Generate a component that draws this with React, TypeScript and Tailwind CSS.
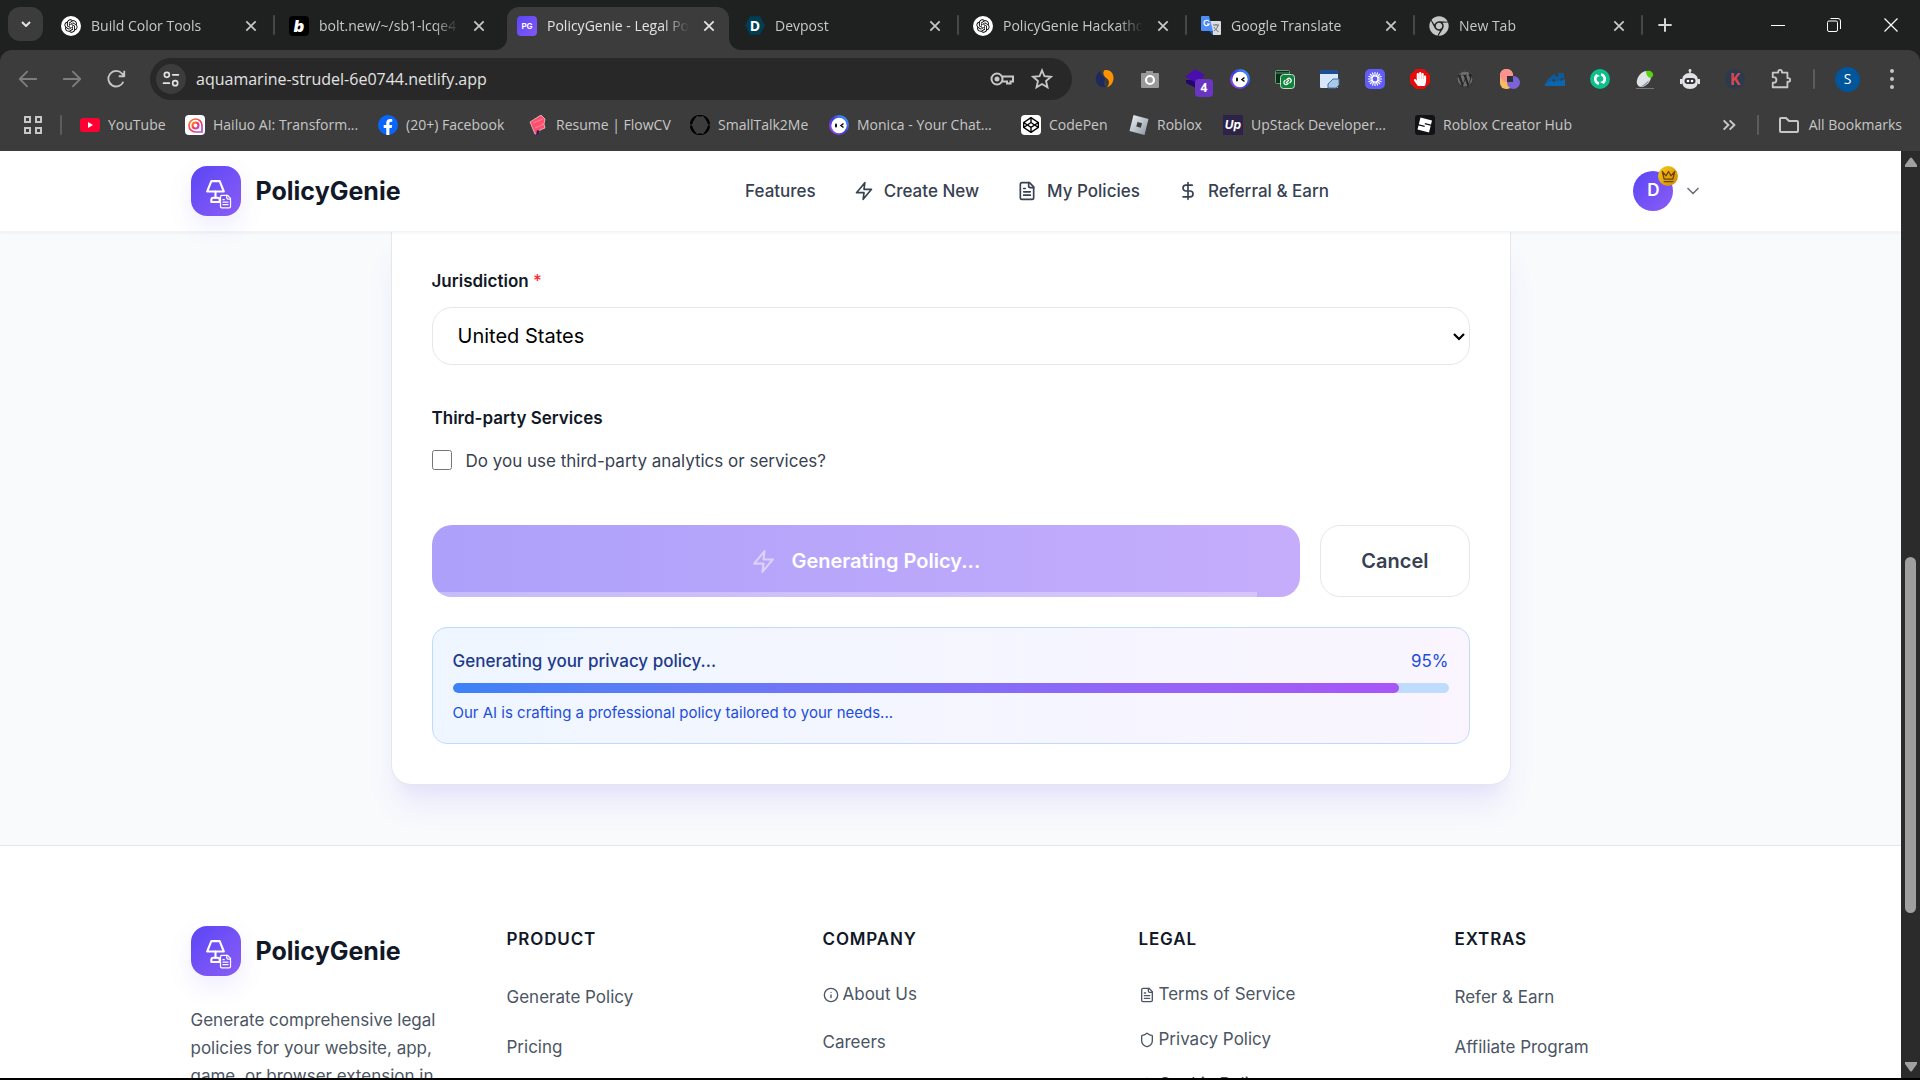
import React, { useState } from "react";
import { RiOpenaiFill } from "react-icons/ri";
import { FaWordpress, FaCodepen, FaChrome, FaFacebookF, FaHandPaper } from "react-icons/fa";

type IconProps = { className?: string; children?: React.ReactNode };

function Icon({ className, children }: IconProps) {
  return (
    <svg viewBox="0 0 24 24" fill="none" stroke="currentColor" strokeWidth="2" strokeLinecap="round" strokeLinejoin="round" aria-hidden="true" className={className}>
      {children}
    </svg>
  );
}

/* ---------- Line icons ---------- */

const Zap = ({ className }: IconProps) => (
  <Icon className={className}><polygon points="13 2 3 14 12 14 11 22 21 10 12 10 13 2" /></Icon>
);
const FileText = ({ className }: IconProps) => (
  <Icon className={className}>
    <path d="M15 2H6a2 2 0 0 0-2 2v16a2 2 0 0 0 2 2h12a2 2 0 0 0 2-2V7Z" />
    <path d="M14 2v4a2 2 0 0 0 2 2h4" />
    <path d="M10 9H8M16 13H8M16 17H8" />
  </Icon>
);
const Dollar = ({ className }: IconProps) => (
  <Icon className={className}><path d="M12 2v20" /><path d="M17 5H9.500a3.500 3.500 0 0 0 0 7h5a3.500 3.500 0 0 1 0 7H6" /></Icon>
);
const Crown = ({ className }: IconProps) => (
  <Icon className={className}><path d="m2 4 3 12h14l3-12-6 7-4-7-4 7-6-7zm3 16h14" /></Icon>
);
const ChevronDown = ({ className }: IconProps) => (
  <Icon className={className}><path d="m6 9 6 6 6-6" /></Icon>
);
const Info = ({ className }: IconProps) => (
  <Icon className={className}><circle cx="12" cy="12" r="10" /><path d="M12 16v-4M12 8h.01" /></Icon>
);
const Shield = ({ className }: IconProps) => (
  <Icon className={className}>
    <path d="M20 13c0 5-3.500 7.500-7.660 8.950a1 1 0 0 1-.670-.010C7.500 20.500 4 18 4 13V6a1 1 0 0 1 1-1c2 0 4.500-1.200 6.240-2.720a1.170 1.170 0 0 1 1.520 0C14.510 3.810 17 5 19 5a1 1 0 0 1 1 1z" />
  </Icon>
);
const Cookie = ({ className }: IconProps) => (
  <Icon className={className}>
    <path d="M12 2a10 10 0 1 0 10 10 4 4 0 0 1-5-5 4 4 0 0 1-5-5" />
    <path d="M8.500 8.500v.01M16 15.500v.01M12 12v.01M11 17v.01M7 14v.01" />
  </Icon>
);
const Cross = ({ className }: IconProps) => (
  <Icon className={className}><path d="M4 4l16 16M20 4 4 20" strokeWidth="3" strokeLinecap="butt" /></Icon>
);

/* ---------- Site icons ---------- */

const OpenAiBadge = () => (
  <span className="flex size-5 items-center justify-center rounded-full bg-white text-black"><RiOpenaiFill className="size-4" /></span>
);
const BoltBadge = () => (
  <span className="flex size-5 items-center justify-center rounded bg-black font-['Inter'] text-base font-black text-white italic">b</span>
);
const GenieBadge = () => (
  <span className="flex size-5 items-center justify-center rounded bg-gradient-to-br from-[#5b45f5] to-[#8358f6] font-['Inter'] text-[8px] font-bold text-white">PG</span>
);
const DevpostBadge = () => (
  <span className="flex size-5 items-center justify-center bg-[#003e54] font-['Open_Sans'] text-sm font-bold text-white [clip-path:polygon(25%_4%,75%_4%,100%_50%,75%_96%,25%_96%,0_50%)]">D</span>
);
const TranslateBadge = () => (
  <svg viewBox="0 0 20 20" className="size-5">
    <path d="M8 5h11a1 1 0 0 1 1 1v12a1 1 0 0 1-1 1h-7z" fill="#dadce0" />
    <path d="M12 9h6M15 8v1M17 9c-.5 3-2.500 5-4 6M13 11c1 2 3 4 4.500 4.500" stroke="#6b7075" fill="none" />
    <path d="M1 0h7l4 15H1a1 1 0 0 1-1-1V1a1 1 0 0 1 1-1z" fill="#4d8df6" />
    <path d="M12 15H8.500l3 4z" fill="#1d56c4" />
    <path d="M8 5.500A2.700 2.700 0 1 0 8.200 8H6" stroke="#fff" strokeWidth="1.200" fill="none" />
  </svg>
);
const MonicaIcon = ({ className }: IconProps) => (
  <svg viewBox="0 0 20 20" className={className}>
    <defs>
      <linearGradient id="mon" x1="0" y1="1" x2="1" y2="0"><stop offset="0" stopColor="#b04bf5" /><stop offset=".5" stopColor="#3d3ae0" /><stop offset="1" stopColor="#3fb6ff" /></linearGradient>
    </defs>
    <circle cx="10" cy="10" r="10" fill="url(#mon)" />
    <circle cx="10" cy="10.500" r="7.700" fill="#fff" />
    <rect x="6" y="8.500" width="2" height="4" rx="1" fill="#111" />
    <path d="m14.500 8.500-2.500 2 2.500 2" stroke="#111" strokeWidth="1.600" fill="none" />
  </svg>
);

/* ---------- Browser: tab strip ---------- */

type TabInfo = { title: string; icon: React.ReactNode; active?: boolean; divider?: boolean };

const tabs: TabInfo[] = [
  { title: "Build Color Tools", icon: <OpenAiBadge />, divider: true },
  { title: "bolt.new/~/sb1-lcqe4", icon: <BoltBadge /> },
  { title: "PolicyGenie - Legal Policy", icon: <GenieBadge />, active: true },
  { title: "Devpost", icon: <DevpostBadge />, divider: true },
  { title: "PolicyGenie Hackathon", icon: <OpenAiBadge />, divider: true },
  { title: "Google Translate", icon: <TranslateBadge />, divider: true },
  { title: "New Tab", icon: <FaChrome className="size-5 text-[#c4c7c5]" />, divider: true },
];

function Tab({ tab }: { tab: TabInfo }) {
  return (
    <div className={tab.active ? "relative flex max-w-[228px] min-w-0 flex-1 pr-0.5 pl-1" : "relative flex max-w-[228px] min-w-0 flex-1"}>
      {tab.active && (
        <>
          <svg viewBox="0 0 12 12" className="absolute bottom-0 -left-2 size-3"><path d="M12 0v12H0A12 12 0 0 0 12 0z" fill="#3c3c3c" /></svg>
          <svg viewBox="0 0 12 12" className="absolute -right-2.5 bottom-0 size-3"><path d="M0 0v12h12A12 12 0 0 1 0 0z" fill="#3c3c3c" /></svg>
        </>
      )}
      <div className={tab.active ? "flex min-w-0 flex-1 items-center rounded-t-xl bg-[#3c3c3c] pr-3 pb-1.5 pl-2.5 text-[#e3e3e3]" : "flex min-w-0 flex-1 items-center pr-4 pb-1.5 pl-3.5 text-[#c7c7c7]"}>
        {tab.icon}
        <span className="ml-2.5 min-w-0 flex-1 overflow-hidden text-sm whitespace-nowrap [mask-image:linear-gradient(to_right,black_82%,transparent)]">{tab.title}</span>
        <button type="button" aria-label={"Close " + tab.title} className="ml-3 flex size-4 items-center justify-center">
          <Cross className="size-3.5" />
        </button>
      </div>
      {tab.divider && <span className="absolute top-2 right-0 h-5 w-0.5 rounded bg-[#474747]" />}
    </div>
  );
}

function TabStrip() {
  return (
    <div className="flex h-[50px] bg-[#1f2120] pt-[7px]">
      <button type="button" aria-label="Search tabs" className="mr-1 ml-2 flex h-[34px] w-[35px] flex-none items-center justify-center rounded-xl bg-[#3c3c3c] text-[#e3e3e3]">
        <Icon className="size-4"><path d="m6 9 6 6 6-6" strokeWidth="3" strokeLinecap="butt" /></Icon>
      </button>
      {tabs.map((t) => <Tab key={t.title} tab={t} />)}
      <button type="button" aria-label="New tab" className="ml-3 flex h-9 w-5 flex-none items-center justify-center text-[#d5d5d5]">
        <Icon className="size-4"><path d="M12 2v20M2 12h20" strokeWidth="3" strokeLinecap="butt" /></Icon>
      </button>
      <div className="ml-auto flex h-9 flex-none items-center text-white">
        <button type="button" aria-label="Minimize" className="flex w-14 justify-center">
          <svg viewBox="0 0 14 14" className="size-3.5"><path d="M0 7.500h14" stroke="currentColor" /></svg>
        </button>
        <button type="button" aria-label="Restore" className="flex w-14 justify-center">
          <svg viewBox="0 0 14 14" fill="none" stroke="currentColor" className="size-3.5"><rect x=".5" y="3" width="10" height="10.500" rx="1.500" /><path d="M3.500.5H11a2.500 2.500 0 0 1 2.500 2.500v8" /></svg>
        </button>
        <button type="button" aria-label="Close window" className="flex w-[58px] justify-center">
          <svg viewBox="0 0 14 14" className="size-3.5"><path d="M.5.5l13 13M13.500.5l-13 13" stroke="currentColor" strokeWidth="1.200" /></svg>
        </button>
      </div>
    </div>
  );
}

/* ---------- Browser: toolbar ---------- */

const extensions: { name: string; art: React.ReactNode }[] = [
  { name: "Similarweb", art: <svg viewBox="0 0 20 20" className="size-5"><path d="M6 2C2 4 0 8 1 12c1 4 5 7 10 6-3-2-2-5-1-8C9 7 5 6 6 2z" fill="#1f2a5c" /><path d="M9 1.500c6-2 10 3 9.500 8.500-.5 4-2.500 7-6.500 8.500 2-3 3-6 .5-8.500C10 8 7 6 9 1.500z" fill="#ff9200" /></svg> },
  { name: "Screenshot", art: <svg viewBox="0 0 20 20" className="size-5"><path d="M6 4V2h7v2h5a1 1 0 0 1 1 1v13a1 1 0 0 1-1 1H2a1 1 0 0 1-1-1V5a1 1 0 0 1 1-1z" fill="#9a9a9a" /><circle cx="10" cy="11" r="4" fill="#9a9a9a" stroke="#fff" strokeWidth="2.200" /></svg> },
  {
    name: "Layers",
    art: (
      <span className="relative">
        <svg viewBox="0 0 20 20" className="size-5"><path d="M1 11v3l10 5 8-8z" fill="#23066b" /><path d="M10 0 20 6 12 14 0 8z" fill="#4a0db0" /></svg>
        <span className="absolute top-2.5 left-2.5 flex h-[18px] w-[18px] items-center justify-center rounded bg-[#6b35c4] text-xs font-bold text-white">4</span>
      </span>
    ),
  },
  { name: "Monica", art: <MonicaIcon className="size-5" /> },
  { name: "Link tool", art: <svg viewBox="0 0 20 20" className="size-5"><rect x=".5" y="1.500" width="14" height="13" rx="1" fill="#06301a" stroke="#7fae8d" strokeWidth=".8" /><path d="M1 4h13" stroke="#7fae8d" strokeWidth=".8" /><rect x="5.500" y="5.500" width="14" height="14" rx="3" fill="#11833a" stroke="#bfe3c9" /><path d="m11 14 3-3M11.500 11l1-1a2 2 0 0 1 3 3l-1 1M13.500 14l-1 1a2 2 0 0 1-3-3l1-1" stroke="#fff" strokeWidth="1.200" fill="none" /></svg> },
  { name: "Window resizer", art: <svg viewBox="0 0 20 20" className="size-5"><rect x="0" y="1" width="18" height="18" rx="1" fill="#d6e8fa" /><path d="M0 1h18v4H0z" fill="#1e4f8f" /><path d="M8 19v-4l5-5h6v6l-3 3z" fill="#a9c9e8" stroke="#466f9d" /></svg> },
  { name: "Loom", art: <svg viewBox="0 0 20 20" className="size-5"><rect width="20" height="20" rx="5" fill="#625df5" /><path d="M10 3v4M10 13v4M3 10h4M13 10h4M5 5l3 3M12 12l3 3M15 5l-3 3M8 12l-3 3M7.300 3.500l1.500 3.700M11.200 12.800l1.500 3.700M12.700 3.500l-1.500 3.700M8.800 12.800l-1.500 3.700M3.500 7.300l3.700 1.500M12.800 11.200l3.700 1.500M16.500 7.300l-3.700 1.500M7.200 11.200l-3.700 1.500" stroke="#fff" strokeWidth="1.100" /><circle cx="10" cy="10" r="3" stroke="#fff" strokeWidth="1.200" fill="#625df5" /></svg> },
  { name: "Ad blocker", art: <span className="flex size-5 items-center justify-center bg-[#e60c0c] text-white [clip-path:polygon(30%_0,70%_0,100%_30%,100%_70%,70%_100%,30%_100%,0_70%,0_30%)]"><FaHandPaper className="size-3.5" /></span> },
  { name: "Wordpress detector", art: <FaWordpress className="size-[18px] rounded-full bg-[#262626] text-[#6e6e6e]" /> },
  { name: "Colour shapes", art: <svg viewBox="0 0 20 20" className="size-5"><rect x="0" y="0" width="13" height="20" rx="6" fill="#f9bb62" /><path d="M0 6.500a6.500 6.500 0 0 1 13 0V13H6.500A6.500 6.500 0 0 1 0 6.500z" fill="#fa9390" /><circle cx="13.500" cy="13.500" r="6.500" fill="#7a63d6" /><path d="M7 7h6v6H7z" fill="#2f2f3a" /></svg> },
  { name: "Trends", art: <svg viewBox="0 0 20 20" className="size-5"><path d="M0 17v-2l5-5 4 3 4-3 3 2 4-2v7z" fill="#0c66ae" /><path d="M1 12l8-7 3 3 2-2-2-2h7v7l-2-2-5 4-3-3-5 3z" fill="#0c5a9c" /></svg> },
  { name: "Refresh", art: <svg viewBox="0 0 20 20" className="size-5"><circle cx="10" cy="10" r="10" fill="#0bc08a" /><path d="M9 14.500A4.500 4.500 0 0 1 6.500 7M11 5.500A4.500 4.500 0 0 1 13.500 13" stroke="#fff" strokeWidth="2.600" fill="none" /><path d="M4 9l2-4 4 2zM16 11l-2 4-4-2z" fill="#fff" /></svg> },
  { name: "Mouse tool", art: <svg viewBox="0 0 20 20" className="size-5"><path d="M1 19.500h18" stroke="#777" /><ellipse cx="9" cy="10" rx="6" ry="9" transform="rotate(38 9 10)" fill="#dfe3e8" /><path d="M5 18c4 0 8-3 9-7-3 3-6 5-9 7z" fill="#8f979f" /><path d="M11 2c4-1 8 1 7 5l-2 2c-3 0-5-3-5-7z" fill="#58d113" /></svg> },
  { name: "Robot", art: <svg viewBox="0 0 20 20" className="size-5"><path d="M10 0v5" stroke="#dadada" strokeWidth="1.500" /><circle cx="10" cy="1.500" r="1.500" fill="#dadada" /><path d="M10 4c5 0 8 3 8 8s-3 8-8 8-8-3-8-8 3-8 8-8z" fill="#e2e2e6" /><path d="M0 10h2v5H0zM18 10h2v5h-2z" fill="#e2e2e6" /><rect x="4.500" y="9" width="11" height="6" rx="3" fill="#333" /><circle cx="8" cy="12" r="1.300" fill="#fff" /><circle cx="12" cy="12" r="1.300" fill="#fff" /></svg> },
  { name: "K tool", art: <span className="flex size-5 items-center justify-center rounded-full bg-[#2b3a4e] text-base font-bold text-[#d9484c]">K</span> },
];

function Toolbar() {
  return (
    <div className="flex h-[58px] items-center text-[#c7c7c7]">
      <div className="flex w-[150px] flex-none items-center pl-[17px]">
        <button type="button" aria-label="Back" className="mr-[22px] text-[#7d7d7d]"><Icon className="size-[22px]"><path d="M21 12H4M11 4l-8 8 8 8" /></Icon></button>
        <button type="button" aria-label="Forward" className="mr-[22px] text-[#7d7d7d]"><Icon className="size-[22px]"><path d="M3 12h17M13 4l8 8-8 8" /></Icon></button>
        <button type="button" aria-label="Reload"><Icon className="size-[22px]"><path d="M20 15a8.500 8.500 0 1 1-1.500-9L21 8.500M21 3v6h-6" strokeLinecap="butt" /></Icon></button>
      </div>
      <div className="flex h-[42px] min-w-0 flex-1 items-center rounded-full bg-[#282828] pr-[19px] pl-1.5">
        <button type="button" aria-label="View site information" className="flex size-[30px] flex-none items-center justify-center rounded-full bg-[#3c3c3c] text-[#e3e3e3]">
          <Icon className="size-5"><circle cx="7" cy="7" r="3" /><path d="M14 7h7M3 17h7" /><circle cx="17" cy="17" r="3" /></Icon>
        </button>
        <input aria-label="Address" defaultValue="aquamarine-strudel-6e0744.netlify.app" className="ml-2.5 min-w-0 flex-1 bg-transparent text-base text-[#e3e3e3] outline-none" />
        <button type="button" aria-label="Passwords" className="mr-[17px]">
          <Icon className="size-6"><circle cx="7" cy="12" r="5.500" /><circle cx="7" cy="12" r="1.500" fill="currentColor" /><path d="M12.500 9.500H23v5h-2.500v2H17v-2h-4.500" strokeLinejoin="miter" /></Icon>
        </button>
        <button type="button" aria-label="Bookmark this tab">
          <Icon className="size-[22px]"><path d="m12 2.500 2.700 6.500 7 .6-5.300 4.600 1.600 6.800-6-3.600L6 21l1.600-6.800L2.300 9.600l7-.6z" strokeLinejoin="miter" /></Icon>
        </button>
      </div>
      <div className="ml-[23px] flex flex-none items-center gap-[25px]">
        {extensions.map((e) => (
          <button key={e.name} type="button" aria-label={e.name} className="flex size-5 items-center justify-center">{e.art}</button>
        ))}
        <button type="button" aria-label="Extensions" className="flex size-[22px] items-center justify-center">
          <Icon className="size-6"><path d="M3 5h6V4a2 2 0 0 1 4 0v1h6v6h1a2 2 0 0 1 0 4h-1v6H3v-5h1a3 3 0 0 0 0-6H3z" /></Icon>
        </button>
      </div>
      <span className="ml-[21px] h-5 w-0.5 flex-none rounded bg-[#5c5c5c]" />
      <button type="button" aria-label="Profile S" className="ml-5 flex size-[25px] flex-none items-center justify-center rounded-full bg-[#00569c] text-sm text-white">S</button>
      <button type="button" aria-label="Menu" className="mr-[18px] ml-[22px] flex-none">
        <svg viewBox="0 0 20 20" className="size-5" fill="currentColor"><circle cx="10" cy="2" r="2" /><circle cx="10" cy="10" r="2" /><circle cx="10" cy="18" r="2" /></svg>
      </button>
    </div>
  );
}

/* ---------- Browser: bookmarks ---------- */

const bookmarks: { title: string; width: string; icon: React.ReactNode }[] = [
  { title: "YouTube", width: "w-[105px]", icon: <svg viewBox="0 0 20 20" className="size-5"><rect y="3" width="20" height="14" rx="3" fill="#f03" /><path d="m8 7 5 3-5 3z" fill="#fff" /></svg> },
  { title: "Hailuo AI: Transform...", width: "w-[193px]", icon: <svg viewBox="0 0 20 20" className="size-5"><defs><linearGradient id="hai" x1="0" y1="0" x2="1" y2="1"><stop offset="0" stopColor="#ff8a2a" /><stop offset=".5" stopColor="#f8394e" /><stop offset="1" stopColor="#b14be8" /></linearGradient></defs><rect width="20" height="20" rx="4" fill="#fff" /><path d="M17 15v-5a6.500 6.500 0 1 0-6.500 7H17z" fill="none" stroke="url(#hai)" strokeWidth="1.700" /><circle cx="10.500" cy="10.500" r="3" fill="none" stroke="url(#hai)" strokeWidth="2.200" /></svg> },
  { title: "(20+) Facebook", width: "w-[150px]", icon: <span className="flex size-5 items-end justify-center rounded-full bg-[#0866ff] text-white"><FaFacebookF className="size-4" /></span> },
  { title: "Resume | FlowCV", width: "w-[162px]", icon: <svg viewBox="0 0 20 20" className="size-5"><path d="m2 7 11-7 4 4-1 5 1 4-5 2-1 3-4 1z" fill="#ff4f6d" stroke="#f3c6cd" strokeWidth=".8" /><path d="m5 8 10-4M7 13l9-4" stroke="#ff8c9c" /><path d="m9 15 3 1-1 3-3 1z" fill="#3a1560" /></svg> },
  { title: "SmallTalk2Me", width: "w-[139px]", icon: <svg viewBox="0 0 20 20" className="size-5" fill="#000"><path d="M8 0C3 1 0 5 0 9.500h2C3 6 5 3 8 0zM12 0c5 1 8 5 8 9.500h-2C17 6 15 3 12 0zM8 20c-5-1-8-5-8-9.500h2C3 14 5 17 8 20zM12 20c5-1 8-5 8-9.500h-2C17 14 15 17 12 20z" /><path d="M7 0h6l-1 1.500H8zM7 20h6l-1-1.500H8z" /></svg> },
  { title: "Monica - Your Chat...", width: "w-[192px]", icon: <MonicaIcon className="size-5" /> },
  { title: "CodePen", width: "w-[108px]", icon: <span className="flex size-5 items-center justify-center rounded-sm bg-white text-black"><FaCodepen className="size-4" /></span> },
  { title: "Roblox", width: "w-[94px]", icon: <svg viewBox="0 0 20 20" className="size-5"><defs><linearGradient id="rbx" x1="0" y1="0" x2="1" y2="1"><stop offset="0" stopColor="#f1f4f7" /><stop offset="1" stopColor="#8994a0" /></linearGradient></defs><path d="m4.500 0 15 4-4 16-15-4z" fill="url(#rbx)" /><path d="m8.500 7 4.500 1.200-1.200 4.600L7.300 11.600z" fill="#3c3c3c" /></svg> },
  { title: "UpStack Developer...", width: "w-[192px]", icon: <span className="flex size-5 items-center justify-center bg-[#2d2348] font-['Inter'] text-xs font-bold text-white italic">Up</span> },
  { title: "Roblox Creator Hub", width: "w-[170px]", icon: <svg viewBox="0 0 20 20" className="size-5"><rect width="20" height="20" rx="3" fill="#111216" /><path d="m5.500 2.500 11.500 3-1 4-6-1.500-.3 1.200 6 1.600-1.700 6.700-11.500-3 1-4 6 1.500.3-1.200-6-1.600z" fill="#fff" /></svg> },
];

function Bookmarks() {
  return (
    <nav aria-label="Bookmarks" className="flex h-[43px] items-center pb-2.5 text-sm text-[#c7c7c7]">
      <button type="button" aria-label="Tab groups" className="ml-6">
        <svg viewBox="0 0 18 18" fill="none" stroke="currentColor" strokeWidth="2" className="size-[18px]"><path d="M1 1h5v5H1zM12 1h5v5h-5zM1 12h5v5H1zM12 12h5v5h-5z" /></svg>
      </button>
      <span className="mr-[18px] ml-[18px] h-5 w-0.5 flex-none rounded bg-[#5c5c5c]" />
      <ul className="flex min-w-0 flex-1 overflow-hidden">
        {bookmarks.map((b) => (
          <li key={b.title} className={b.width + " flex-none"}>
            <a href="#" className="flex items-center gap-2 whitespace-nowrap"><span className="flex-none">{b.icon}</span>{b.title}</a>
          </li>
        ))}
      </ul>
      <button type="button" aria-label="More bookmarks"><Icon className="size-4"><path d="m4 5 7 7-7 7M13 5l7 7-7 7" strokeWidth="3" strokeLinecap="butt" strokeLinejoin="miter" /></Icon></button>
      <span className="mx-5 h-5 w-0.5 flex-none rounded bg-[#5c5c5c]" />
      <button type="button" className="mr-[18px] flex flex-none items-center gap-2.5">
        <svg viewBox="0 0 20 20" fill="none" stroke="currentColor" strokeWidth="2" strokeLinejoin="round" className="size-5"><path d="M1 4a1 1 0 0 1 1-1h5l3 3h8a1 1 0 0 1 1 1v9a1 1 0 0 1-1 1H2a1 1 0 0 1-1-1z" /></svg>
        All Bookmarks
      </button>
    </nav>
  );
}

/* ---------- Site ---------- */

function Brand() {
  return (
    <a href="#" className="flex items-center gap-[15px]">
      <span className="flex size-[50px] items-center justify-center rounded-2xl bg-gradient-to-br from-[#5b45f5] to-[#8b5cf6] text-white shadow-[0_10px_25px_rgba(99,66,246,0.10)]">
        <span className="relative">
          <Icon className="size-[25px]"><path d="M8 2h8l4 10H4L8 2Z" /><path d="M12 12v6" /><path d="M8 22v-2c0-1.100.9-2 2-2h4a2 2 0 0 1 2 2v2H8Z" /></Icon>
          <svg viewBox="0 0 24 24" fill="none" stroke="currentColor" strokeWidth="2" strokeLinecap="round" strokeLinejoin="round" className="absolute -right-[5px] -bottom-[5px] size-[15px]">
            <path d="M15 2H6a2 2 0 0 0-2 2v16a2 2 0 0 0 2 2h12a2 2 0 0 0 2-2V7Z" fill="#7852f5" />
            <path d="M14 2v4a2 2 0 0 0 2 2h4M10 9H8M16 13H8M16 17H8" />
          </svg>
        </span>
      </span>
      <span className="text-[25px] leading-[35px] font-bold text-[#111827]">PolicyGenie</span>
    </a>
  );
}

function SiteHeader() {
  return (
    <header className="relative z-10 border-b border-gray-100 bg-white shadow-[0_1px_3px_rgba(0,0,0,0.05)]">
      <div className="mx-auto flex h-20 max-w-[1600px] items-center justify-between px-10">
        <Brand />
        <nav aria-label="Main" className="flex items-center gap-[38px] pl-10 text-[17px] leading-7 font-medium text-[#374151]">
          <a href="#">Features</a>
          <a href="#" className="flex items-center gap-2.5"><Zap className="size-5" />Create New</a>
          <a href="#" className="flex items-center gap-2.5"><FileText className="size-5" />My Policies</a>
          <a href="#" className="flex items-center gap-2.5"><Dollar className="size-5" />Referral &amp; Earn</a>
        </nav>
        <button type="button" aria-label="Account menu" className="mr-[7px] flex items-center gap-2.5">
          <span className="relative flex size-10 items-center justify-center rounded-full bg-gradient-to-br from-[#5b45f5] to-[#8b5cf6] text-[17px] font-semibold text-white">
            D
            <span className="absolute -top-[5px] -right-[5px] flex size-5 items-center justify-center rounded-full bg-gradient-to-br from-[#facc15] to-[#ca8a04] text-[#713f12]"><Crown className="size-[15px]" /></span>
          </span>
          <ChevronDown className="size-5 text-gray-500" />
        </button>
      </div>
    </header>
  );
}

function PolicyForm() {
  const [progress] = useState(95);
  return (
    <form className="mx-auto max-w-[1120px] rounded-b-[20px] border border-t-0 border-gray-200 bg-white px-10 pt-9 pb-10 shadow-[0_25px_31px_-6px_rgba(91,66,243,0.10),0_12px_12px_-6px_rgba(91,66,243,0.04)]">
      <label htmlFor="jurisdiction" className="block text-[17px] leading-[27px] font-semibold text-[#111827]">Jurisdiction <span className="font-medium text-red-500">*</span></label>
      <div className="relative mt-3">
        <select id="jurisdiction" defaultValue="us" className="h-[58px] w-full appearance-none rounded-[20px] border border-gray-200 bg-white px-[25px] text-xl text-black">
          <option value="us">United States</option>
          <option value="eu">European Union</option>
        </select>
        <svg viewBox="0 0 12 8" aria-hidden="true" className="pointer-events-none absolute top-[26px] right-[5px] h-2 w-3"><path d="m1 1 5 5 5-5" fill="none" stroke="#000" strokeWidth="2.200" /></svg>
      </div>
      <fieldset className="mt-10">
        <legend className="text-[17px] leading-[27px] font-semibold text-[#111827]">Third-party Services</legend>
        <label className="mt-4 flex items-start gap-3.5 text-[17px] leading-[27px] text-[#374151]">
          <input type="checkbox" className="mt-0.5 size-5" />
          Do you use third-party analytics or services?
        </label>
      </fieldset>
      <div className="mt-[50px] flex gap-5">
        <button type="button" disabled className="relative flex h-[72px] flex-1 items-center justify-center gap-[15px] overflow-hidden rounded-[20px] bg-gradient-to-r from-[#ada0fa] to-[#c5adfb] text-xl font-semibold text-white">
          <Zap className="size-[25px] text-white/50" />
          Generating Policy...
          <span className="absolute bottom-0 left-0 h-[5px] bg-white/30" style={{ width: progress + "%" }} />
        </button>
        <button type="button" className="h-[72px] rounded-[20px] border border-gray-200 bg-white px-10 text-xl font-semibold text-[#374151]">Cancel</button>
      </div>
      <section aria-label="Progress" className="mt-[30px] rounded-[15px] border border-blue-200 bg-gradient-to-r from-[#eff6ff] to-[#faf5ff] p-5">
        <div className="flex justify-between text-[17px] leading-[27px]">
          <span className="font-medium text-[#1e3a8a]">Generating your privacy policy...</span>
          <span className="text-[#1d4ed8]">{progress}%</span>
        </div>
        <div role="progressbar" aria-valuenow={progress} className="mt-2 h-2.5 overflow-hidden rounded-full bg-[#bfdbfe]">
          <div className="h-full rounded-full bg-gradient-to-r from-[#3b82f6] to-[#a855f7]" style={{ width: progress + "%" }} />
        </div>
        <p className="mt-2.5 text-[15px] leading-5 text-[#1d4ed8]">Our AI is crafting a professional policy tailored to your needs...</p>
      </section>
    </form>
  );
}

type FooterLink = { label: string; icon?: React.ReactNode };
const footerColumns: { heading: string; links: FooterLink[] }[] = [
  { heading: "PRODUCT", links: [{ label: "Generate Policy" }, { label: "Pricing" }] },
  { heading: "COMPANY", links: [{ label: "About Us", icon: <Info className="size-4" /> }, { label: "Careers" }] },
  { heading: "LEGAL", links: [{ label: "Terms of Service", icon: <FileText className="size-4" /> }, { label: "Privacy Policy", icon: <Shield className="size-4" /> }, { label: "Cookie Policy", icon: <Cookie className="size-4" /> }] },
  { heading: "EXTRAS", links: [{ label: "Refer & Earn" }, { label: "Affiliate Program" }] },
];

function SiteFooter() {
  return (
    <footer className="border-t border-gray-200 bg-white pt-20">
      <div className="mx-auto grid max-w-[1600px] grid-cols-5 gap-[60px] px-10">
        <div>
          <Brand />
          <p className="mt-[30px] text-[17px] leading-7 text-[#4b5563]">Generate comprehensive legal policies for your website, app, game, or browser extension in seconds with AI.</p>
        </div>
        {footerColumns.map((c) => (
          <div key={c.heading}>
            <h3 className="text-[17px] leading-[27px] font-semibold tracking-wider text-[#111827]">{c.heading}</h3>
            <ul className="mt-7 space-y-[18px] text-[17px] text-[#4b5563]">
              {c.links.map((l) => (
                <li key={l.label}>
                  <a href="#" className={l.icon ? "flex items-center gap-1 leading-[27px]" : "block leading-8"}>{l.icon}{l.label}</a>
                </li>
              ))}
            </ul>
          </div>
        ))}
      </div>
    </footer>
  );
}

function Scrollbar() {
  return (
    <div aria-hidden="true" className="flex w-[19px] flex-none flex-col items-center bg-[#2b2b2b] py-1.5">
      <svg viewBox="0 0 12 10" className="h-2.5 w-3"><path d="M5 1a1.300 1.300 0 0 1 2 0l5 7a1 1 0 0 1-1 2H1a1 1 0 0 1-1-2z" fill="#a0a0a0" /></svg>
      <div className="grow-[390]" />
      <div className="w-[11px] grow-[356] rounded-full bg-[#9f9f9f]" />
      <div className="grow-[149]" />
      <svg viewBox="0 0 12 10" className="h-2.5 w-3"><path d="M5 9a1.300 1.300 0 0 0 2 0l5-7a1 1 0 0 0-1-2H1a1 1 0 0 0-1 2z" fill="#a0a0a0" /></svg>
    </div>
  );
}

export default function App() {
  return (
    <div className="flex h-screen flex-col overflow-hidden bg-black pb-0.5">
      <div className="flex-none bg-[#1f2120] font-['Open_Sans',sans-serif]">
        <TabStrip />
        <div className="rounded-t-xl bg-[#3c3c3c]">
          <Toolbar />
          <Bookmarks />
        </div>
      </div>
      <div className="flex min-h-0 flex-1 overflow-hidden bg-[#f9fafc] font-['Inter',sans-serif]">
        <div className="min-w-0 flex-1 overflow-hidden">
          <SiteHeader />
          <main className="bg-[#f9fafc] pb-[60px]">
            <PolicyForm />
          </main>
          <SiteFooter />
        </div>
        <Scrollbar />
      </div>
    </div>
  );
}
